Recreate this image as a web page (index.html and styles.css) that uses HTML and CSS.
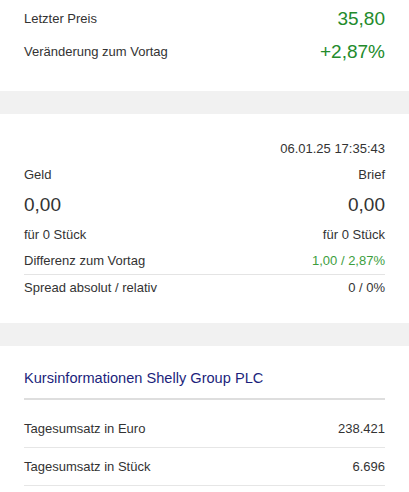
FILE: index.html
```html
<!DOCTYPE html>
<html lang="de">
<head>
<meta charset="utf-8">
<link rel="stylesheet" href="styles.css">
</head>
<body>
<section class="card card-price">
  <div class="row row-big">
    <span class="label">Letzter Preis</span>
    <span class="big green">35,80</span>
  </div>
  <div class="row row-big">
    <span class="label">Veränderung zum Vortag</span>
    <span class="big green">+2,87%</span>
  </div>
</section>
<div class="band"></div>
<section class="card card-quote">
  <div class="row row-sm row-end">
    <span class="label">06.01.25 17:35:43</span>
  </div>
  <div class="row row-sm">
    <span class="label">Geld</span>
    <span class="label">Brief</span>
  </div>
  <div class="row row-num">
    <span class="big">0,00</span>
    <span class="big">0,00</span>
  </div>
  <div class="row row-sm">
    <span class="label">für 0 Stück</span>
    <span class="label">für 0 Stück</span>
  </div>
  <div class="row row-sm row-line">
    <span class="label">Differenz zum Vortag</span>
    <span class="label lightgreen">1,00 / 2,87%</span>
  </div>
  <div class="row row-sm">
    <span class="label">Spread absolut / relativ</span>
    <span class="label">0 / 0%</span>
  </div>
</section>
<div class="band"></div>
<section class="card card-info">
  <h2 class="title">Kursinformationen Shelly Group PLC</h2>
  <div class="list">
    <div class="row row-item">
      <span class="label">Tagesumsatz in Euro</span>
      <span class="label">238.421</span>
    </div>
    <div class="row row-item">
      <span class="label">Tagesumsatz in Stück</span>
      <span class="label">6.696</span>
    </div>
  </div>
</section>
</body>
</html>
```
FILE: styles.css
```css
html, body {
  margin: 0;
  padding: 0;
  background: #ffffff;
}
body {
  font-family: "Liberation Sans", Arial, sans-serif;
  color: #333333;
  width: 409px;
}
.card {
  padding: 0 24px;
}
.card-price {
  padding-top: 2px;
  padding-bottom: 23px;
}
.card-quote {
  padding-top: 22px;
  padding-bottom: 22px;
}
.card-info {
  padding-top: 20px;
}
.band {
  height: 23px;
  background: #f1f1f1;
}
.row {
  display: flex;
  justify-content: space-between;
  align-items: center;
}
.row-end {
  justify-content: flex-end;
}
.row-big {
  height: 33px;
}
.row-sm {
  height: 26px;
}
.row-num {
  height: 34px;
}
.row-line {
  border-bottom: 1px solid #e4e4e4;
}
.label {
  font-size: 13px;
  line-height: 16px;
}
.big {
  font-size: 19px;
  line-height: 22px;
}
.green {
  color: #238b2c;
}
.lightgreen {
  color: #3d9e3d;
}
.title {
  margin: 0;
  font-size: 14.6px;
  font-weight: normal;
  line-height: 24px;
  color: #1c1f7c;
  padding-bottom: 8px;
  border-bottom: 2px solid #dedede;
}
.list {
  margin-top: 10px;
}
.row-item {
  height: 37px;
  border-bottom: 1px solid #e6e6e6;
}
```
